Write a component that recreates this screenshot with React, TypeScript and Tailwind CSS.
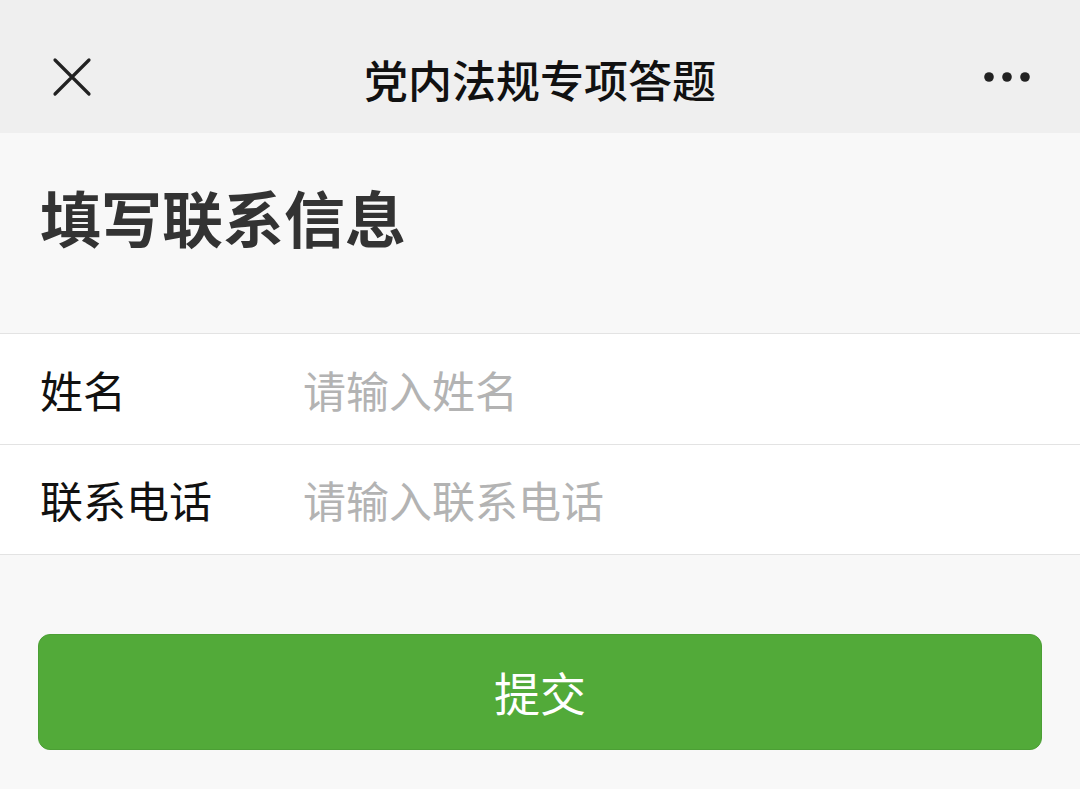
import React from 'react';

const font = { fontFamily: '"Noto Sans CJK SC", "Noto Sans", sans-serif' };

export default function App() {
  return (
    <div className="w-[1080px] h-[789px] bg-[#f8f8f8] overflow-hidden" style={font}>
      <header className="h-[133px] bg-[#efefef] flex items-center justify-between px-[52px] pt-[21px] relative">
        <svg width="40" height="40" viewBox="0 0 40 40">
          <path d="M3 3 L37 37 M37 3 L3 37" stroke="#222" strokeWidth="3.2" strokeLinecap="round" />
        </svg>
        <h1 className="absolute left-0 right-0 top-[57px] text-center text-[44px] font-medium text-[#111] leading-none pointer-events-none">
          党内法规专项答题
        </h1>
        <svg width="46" height="12" viewBox="0 0 46 12" className="mr-[-2px]">
          <circle cx="5" cy="6" r="4.8" fill="#222" />
          <circle cx="23" cy="6" r="4.8" fill="#222" />
          <circle cx="41" cy="6" r="4.8" fill="#222" />
        </svg>
      </header>
      <div className="h-[200px] flex items-start pt-[53px] px-[40px]">
        <h2 className="text-[61px] font-bold text-[#333] leading-none">填写联系信息</h2>
      </div>
      <div className="bg-white border-t border-[#e3e3e3]">
        <div className="h-[111px] flex items-center px-[40px] border-b border-[#e3e3e3]">
          <span className="w-[263px] text-[43px] text-[#111]">姓名</span>
          <input
            placeholder="请输入姓名"
            className="flex-1 text-[43px] outline-none bg-transparent placeholder:text-[#b3b3b3]"
          />
        </div>
        <div className="h-[110px] flex items-center px-[40px] border-b border-[#e3e3e3]">
          <span className="w-[263px] text-[43px] text-[#111]">联系电话</span>
          <input
            placeholder="请输入联系电话"
            className="flex-1 text-[43px] outline-none bg-transparent placeholder:text-[#b3b3b3]"
          />
        </div>
      </div>
      <div className="px-[38px] pt-[79px]">
        <button className="w-full h-[116px] rounded-[12px] bg-[#52aa39] text-white text-[46px] leading-none pb-[2px] border border-[#4c9f35]">
          提交
        </button>
      </div>
    </div>
  );
}
